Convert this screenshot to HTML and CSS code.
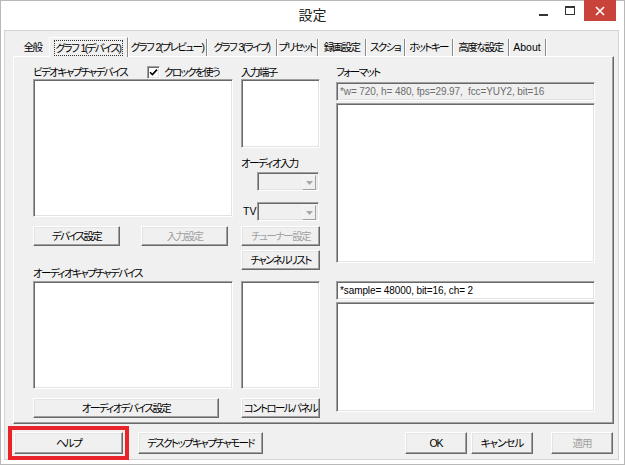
FILE: index.html
```html
<!DOCTYPE html>
<html lang="ja">
<head>
<meta charset="utf-8">
<title>設定</title>
<link rel="stylesheet" href="styles.css">
</head>
<body>
<div class="win">
  <div class="titlebar">
    <span class="title">設定</span>
    <div class="ctrls">
      <span class="ctl-min"></span>
      <span class="ctl-max"></span>
      <span class="ctl-close"><svg width="10" height="10" viewBox="0 0 10 10"><path d="M1 1L9 9M9 1L1 9" stroke="#fff" stroke-width="1.6"/></svg></span>
    </div>
  </div>
  <div class="client">
    <div class="tabs">
      <span class="tab">全般</span>
      <span class="tab sel"><span class="focus">グラフ 1(デバイス)</span></span>
      <span class="tab">グラフ 2(プレビュー)</span>
      <span class="tab">グラフ 3(ライブ)</span>
      <span class="tab">プリセット</span>
      <span class="tab">録画設定</span>
      <span class="tab">スクショ</span>
      <span class="tab">ホットキー</span>
      <span class="tab">高度な設定</span>
      <span class="tab latin">About</span>
    </div>
    <div class="panel">
      <div class="col col-left">
        <div class="lbl-row">
          <span class="lbl">ビデオキャプチャデバイス</span>
          <span class="chk-group">
            <span class="chk"><svg width="9" height="9" viewBox="0 0 9 9"><path d="M1 4.2L3.4 6.6L8 1.6" fill="none" stroke="#000" stroke-width="1.6"/></svg></span>
            <span class="lbl">クロックを使う</span>
          </span>
        </div>
        <div class="list list1"></div>
        <div class="btn-row">
          <span class="btn w87">デバイス設定</span>
          <span class="btn w87 dis">入力設定</span>
        </div>
        <div class="lbl lbl-audio">オーディオキャプチャデバイス</div>
        <div class="list list3"></div>
        <span class="btn w186 mt9">オーディオデバイス設定</span>
      </div>
      <div class="col col-mid">
        <div class="lbl">入力端子</div>
        <div class="list list2"></div>
        <div class="lbl lbl-ain">オーディオ入力</div>
        <div class="combo combo-ain"><span class="drop"><svg width="7" height="4" viewBox="0 0 7 4"><path d="M0 0H7L3.5 4Z" fill="#a8a8a8"/></svg></span></div>
        <div class="tv-row">
          <span class="lbl tv">TV</span>
          <div class="combo"><span class="drop"><svg width="7" height="4" viewBox="0 0 7 4"><path d="M0 0H7L3.5 4Z" fill="#a8a8a8"/></svg></span></div>
        </div>
        <span class="btn w79 dis mt5">チューナー設定</span>
        <span class="btn w79 mt4">チャンネルリスト</span>
        <div class="list list4"></div>
        <span class="btn w79 mt9">コントロールパネル</span>
      </div>
      <div class="col col-right">
        <div class="lbl">フォーマット</div>
        <div class="edit edit-dis">*w= 720, h= 480, fps=29.97,&nbsp; fcc=YUY2, bit=16</div>
        <div class="list list5"></div>
        <div class="edit edit-audio">*sample= 48000, bit=16, ch= 2</div>
        <div class="list list6"></div>
      </div>
    </div>
    <div class="footer">
      <span class="help-wrap"><span class="btn fbtn w109">ヘルプ</span></span>
      <span class="btn fbtn w125">デスクトップキャプチャモード</span>
      <span class="spacer"></span>
      <span class="btn fbtn w62">OK</span>
      <span class="btn fbtn w62">キャンセル</span>
      <span class="btn fbtn w62 dis apply">適用</span>
    </div>
  </div>
</div>
</body>
</html>
```
FILE: styles.css
```css
* { box-sizing: border-box; }
html, body { margin: 0; padding: 0; background: #fff; }
body {
  width: 625px; height: 465px; overflow: hidden;
  font-family: "Liberation Sans", "Noto Sans CJK JP", sans-serif;
  font-size: 10.5px;
  letter-spacing: -1.6px;
  font-feature-settings: "palt" 1;
  color: #000;
}
.win {
  width: 625px; height: 465px;
  border: 1px solid #b8b8b8;
  background: #fff;
  display: flex; flex-direction: column;
}
.titlebar {
  height: 29px; position: relative;
  display: flex; align-items: center; justify-content: center;
}
.title { font-family: "Noto Sans CJK JP", sans-serif; font-size: 14px; letter-spacing: 0; color: #222; margin-top: -3px; }
.ctrls { position: absolute; right: 8px; top: -1px; display: flex; align-items: flex-start; }
.ctl-min { width: 9px; height: 2px; background: #333; margin: 14px 17px 0 0; }
.ctl-max { width: 10px; height: 9px; border: 1px solid #333; border-top-width: 2px; margin: 6px 9px 0 0; }
.ctl-close {
  width: 32px; height: 21px; background: #c9433b;
  display: flex; align-items: center; justify-content: center;
}
.client {
  margin: 0 5px 0 3px; height: 430px;
  background: #f0f0f0;
  border: 1px solid #d4d4d4;
  display: flex; flex-direction: column;
}
.tabs {
  display: flex; align-items: flex-end; height: 22px;
  margin: 3px 0 0 11px;
}
.tab {
  height: 17px; line-height: 16px;
  border-right: 1px solid #8a8a8a;
  box-shadow: 1px 0 0 #fff;
  white-space: nowrap; letter-spacing: -1.6px; word-spacing: 1px;
  display: flex; justify-content: center;
}
.tab:nth-child(1) { width: 33px; border-right: none; box-shadow: none; }
.tab:nth-child(2) { width: 79px; }
.tab:nth-child(3) { width: 79px; }
.tab:nth-child(4) { width: 70px; }
.tab:nth-child(5) { width: 41px; }
.tab:nth-child(6) { width: 48px; }
.tab:nth-child(7) { width: 39px; }
.tab:nth-child(8) { width: 48px; }
.tab:nth-child(9) { width: 56px; }
.tab:nth-child(10) { width: 37px; letter-spacing: 0; }
.tab.sel {
  height: 20px; margin-bottom: -1px; padding-top: 1px;
  border-left: 1px solid #fff; border-top: 1px solid #fff;
  background: #f0f0f0; position: relative; z-index: 1;
  align-items: flex-start;
}
.focus { border: 1px dotted #333; padding: 0 2px 0 1px; display: inline-block; line-height: 14px; margin-top: 1px; }
.panel {
  margin-left: 8px; width: 601px; height: 368px;
  border: 1px solid; border-color: #fff #696969 #696969 #fff;
  box-shadow: inset -1px -1px 0 #a0a0a0;
  display: flex; padding: 9px 0 0 19px;
}
.col { display: flex; flex-direction: column; align-items: flex-start; }
.col-left { width: 200px; }
.col-mid { width: 80px; margin-left: 8px; }
.col-right { width: 259px; margin-left: 15px; }
.lbl { height: 13px; line-height: 13px; white-space: nowrap; }
.lbl-row { display: flex; width: 200px; height: 13px; }
.chk-group { display: flex; margin-left: auto; width: 86px; }
.chk {
  width: 13px; height: 13px; background: #fff; margin-right: 4px;
  border: 1px solid; border-color: #a0a0a0 #fff #fff #a0a0a0;
  box-shadow: inset 1px 1px 0 #696969, inset -1px -1px 0 #e3e3e3;
  display: flex; align-items: center; justify-content: center;
}
.list, .edit, .combo {
  background: #fff;
  border: 1px solid; border-color: #a0a0a0 #fff #fff #a0a0a0;
  box-shadow: inset 1px 1px 0 #696969, inset -1px -1px 0 #e3e3e3;
}
.list1 { width: 200px; height: 138px; }
.list2 { width: 79px; height: 69px; }
.list3 { width: 200px; height: 108px; }
.list4 { width: 79px; height: 108px; margin-top: 11px; }
.list5 { width: 259px; height: 160px; margin-top: 2px; }
.list6 { width: 259px; height: 110px; margin-top: 2px; }
.edit {
  width: 259px; height: 19px; line-height: 16px; padding: 1px 3px;
  white-space: nowrap; overflow: hidden;
  font-size: 10px; letter-spacing: -0.1px;
}
.edit-dis { background: #f0f0f0; color: #6d6d6d; margin-top: 3px; }
.edit-audio { margin-top: 18px; }
.btn-row { display: flex; gap: 21px; margin-top: 9px; }
.btn {
  display: flex; align-items: center; justify-content: center;
  height: 20px; background: #f0f0f0;
  border: 1px solid; border-color: #fff #696969 #696969 #fff;
  box-shadow: inset -1px -1px 0 #a0a0a0, inset 1px 1px 0 #e3e3e3;
  white-space: nowrap; padding-bottom: 1px;
}
.btn.dis { color: #a0a0a0; }
.w87 { width: 87px; }
.w79 { width: 79px; }
.w186 { width: 186px; }
.w109 { width: 109px; }
.w125 { width: 125px; }
.w62 { width: 62px; }
.mt9 { margin-top: 9px; }
.mt5 { margin-top: 5px; }
.mt4 { margin-top: 4px; }
.lbl-audio { margin-top: 21px; height: 14px; }
.lbl-ain { margin-top: 9px; }
.combo { width: 62px; height: 19px; position: relative; background: #f0f0f0; }
.combo-ain { margin-top: 2px; margin-left: 16px; }
.drop {
  position: absolute; right: 2px; top: 2px; width: 14px; height: 15px;
  background: #f0f0f0;
  border: 1px solid; border-color: #f5f5f5 #a0a0a0 #a0a0a0 #f5f5f5;
  display: flex; align-items: center; justify-content: center;
}
.tv-row { display: flex; align-items: center; margin-top: 11px; height: 19px; }
.tv { width: 16px; padding-left: 2px; letter-spacing: 0; }
.footer {
  display: flex; align-items: center; margin-top: 8px; height: 22px;
  padding-left: 9px; padding-right: 5px; gap: 4px;
}
.fbtn { height: 22px; }
.fbtn.w62 { letter-spacing: -1px; }
.help-wrap {
  outline: 4px solid #e8232a; outline-offset: 2px; display: flex;
  margin-right: 11px;
}
.spacer { flex: 1; }
.apply { margin-left: 14px; }
```
